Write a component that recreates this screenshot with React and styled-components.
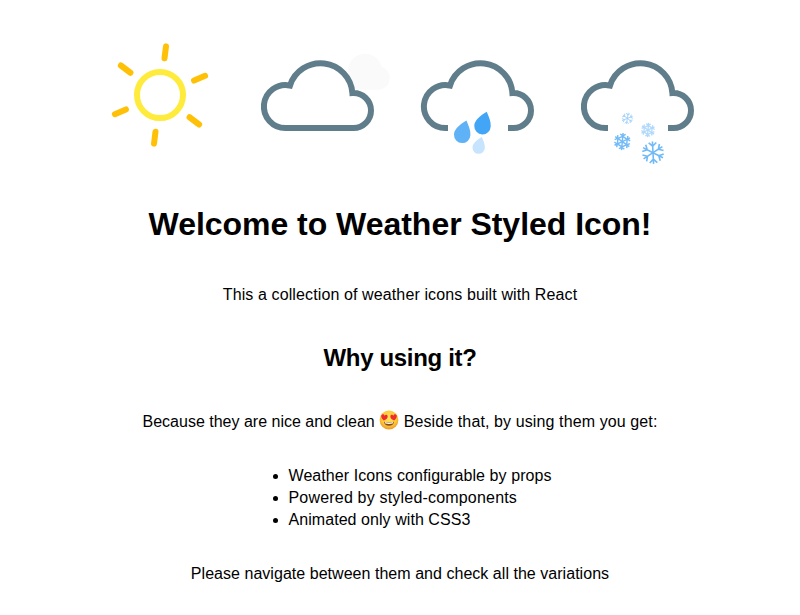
import React from "react";
import styled, { createGlobalStyle } from "styled-components";

const GlobalStyle = createGlobalStyle`
  body {
    margin: 0;
    background: #fff;
    color: #000;
    font-family: "Liberation Sans", Helvetica, Arial, sans-serif;
    font-size: 16px;
    line-height: 22px;
  }
`;

const Page = styled.main`
  display: flex;
  flex-direction: column;
  align-items: center;
  height: 615px;
  overflow: hidden;
`;

const IconRow = styled.div`
  display: flex;
  padding-top: 15px;
`;

const Icon = styled.svg`
  display: block;
  width: 160px;
  height: 160px;
`;

const Title = styled.h1`
  margin: 27px 0 0;
  font-size: 32px;
  line-height: 44px;
  letter-spacing: -0.03px;
  white-space: nowrap;
`;

const Subtitle = styled.h2`
  margin: 35px 0 0;
  font-size: 24px;
  line-height: 34px;
  letter-spacing: -0.33px;
  white-space: nowrap;
`;

const Text = styled.p`
  margin: ${(p) => p.$top} 0 0;
  letter-spacing: ${(p) => p.$spacing || "0"};
  white-space: nowrap;
`;

const Phrase = styled.span`
  letter-spacing: ${(p) => p.$spacing};
`;

const List = styled.ul`
  margin: 32px 0 0;
  padding-left: 40px;
  width: 263px;
`;

const Item = styled.li`
  letter-spacing: ${(p) => p.$spacing || "0"};
  white-space: nowrap;
`;

const Emoji = styled.svg`
  display: inline-block;
  width: 20px;
  height: 20px;
  vertical-align: 0;
  margin: -3px 0;
`;

const CLOUD_ARCS =
  "M48 113H45.5A21.5 21.5 0 1 1 50 70.5A32 32 0 0 1 112.4 78.05A17.5 17.5 0 0 1 131 95.5A17.5 17.5 0 0 1 113.5 113";

function Sun() {
  return (
    <Icon viewBox="0 0 160 160" fill="none" strokeWidth="6">
      <circle cx="80" cy="80" r="23" stroke="#ffeb3b" />
      {[7, 67, 127, 187, 247, 307].map((angle) => (
        <path
          key={angle}
          d="M80 43V31"
          stroke="#ffc107"
          strokeLinecap="round"
          transform={`rotate(${angle} 80 80)`}
        />
      ))}
    </Icon>
  );
}

function Cloud() {
  return (
    <Icon viewBox="0 0 160 160">
      <circle cx="125" cy="55.5" r="16.8" fill="#fafafa" />
      <circle cx="138" cy="63" r="11.8" fill="#fafafa" />
      <path d="M110 60H138V74.8H110Z" fill="#fafafa" />
      <path d={`${CLOUD_ARCS}Z`} fill="#fff" stroke="#607d8b" strokeWidth="6" />
    </Icon>
  );
}

const DROP = "M4.4 -13.2C-2 -9.4 -8 -4.5 -8 0.9A8.2 8.2 0 0 0 8.4 1.5C8.8 -3.5 6.6 -8 4.4 -13.2Z";

function Rain() {
  return (
    <Icon viewBox="0 0 160 160">
      <path d={`${CLOUD_ARCS}H108`} fill="none" stroke="#607d8b" strokeWidth="6" />
      <path d={DROP} fill="#42a5f5" transform="translate(82.3 110)" />
      <path d={DROP} fill="#60b2f7" transform="translate(62 118.7)" />
      <path d={DROP} fill="#c6e4fd" transform="translate(78.5 131.8) scale(.75)" />
    </Icon>
  );
}

function Flake({ x, y, size, angle = 0, color, weight = 1.5, ring = false }) {
  return (
    <g
      transform={`translate(${x} ${y}) rotate(${angle}) scale(${size / 10})`}
      stroke={color}
      strokeWidth={(weight * 10) / size}
      fill="none"
    >
      {[0, 60, 120, 180, 240, 300].map((a) => (
        <path
          key={a}
          d={ring ? "M0 0V-10M-3.2 -8.6L0 -6.6L3.2 -8.6" : "M0 0V-10M-3.4 -9L0 -5.8L3.4 -9"}
          transform={`rotate(${a})`}
        />
      ))}
      {ring && <path d="M0 -6.2L5.4 -3.1V3.1L0 6.2L-5.4 3.1V-3.1Z" />}
    </g>
  );
}

function Snow() {
  return (
    <Icon viewBox="0 0 160 160">
      <path d={`${CLOUD_ARCS}H108`} fill="none" stroke="#607d8b" strokeWidth="6" />
      <Flake x={67.4} y={103.4} size={5.7} angle={8} color="#9bcdf9" weight={0.8} />
      <Flake x={88} y={115} size={7.2} angle={5} color="#b0d9fb" weight={1.3} ring />
      <Flake x={62.3} y={126.6} size={8.6} angle={5} color="#72bbf7" weight={1.45} ring />
      <Flake x={93} y={137.7} size={11.2} angle={-3} color="#70baf7" weight={1.6} />
    </Icon>
  );
}

const HEART =
  "M0 3.3C-3 1.4 -3.6 -.2 -3.1 -1.6C-2.6 -3 -.8 -3 0 -1.5C.8 -3 2.6 -3 3.1 -1.6C3.6 -.2 3 1.4 0 3.3Z";

function HeartEyes() {
  return (
    <Emoji viewBox="0 0 20 20" role="img" aria-label="😍">
      <defs>
        <radialGradient id="face" cx=".5" cy=".4" r=".6">
          <stop offset="0" stopColor="#ffe65a" />
          <stop offset=".65" stopColor="#fdca38" />
          <stop offset="1" stopColor="#ed962a" />
        </radialGradient>
      </defs>
      <circle cx="10" cy="10" r="9.4" fill="url(#face)" />
      <path d="M5 11.7Q10 13.3 15 11.7Q14.5 15.7 10 15.7T5 11.7Z" fill="#8a4a18" />
      <path d="M5.8 12.1Q10 13.3 14.2 12.1L13.7 13.5Q10 14.4 6.3 13.5Z" fill="#fff" />
      <path d={HEART} fill="#f02b30" transform="translate(5.3 7.2) rotate(10)" />
      <path d={HEART} fill="#f02b30" transform="translate(14.7 7.2) rotate(-10)" />
    </Emoji>
  );
}

export default function App() {
  return (
    <Page>
      <GlobalStyle />
      <IconRow>
        <Sun />
        <Cloud />
        <Rain />
        <Snow />
      </IconRow>
      <Title>Welcome to Weather Styled Icon!</Title>
      <Text $top="38px" $spacing="0.115px">
        This a collection of weather icons built with React
      </Text>
      <Subtitle>Why using it?</Subtitle>
      <Text $top="36px">
        Because they are nice and clean <HeartEyes />
        <Phrase $spacing="0.11px"> Beside that, by using them you get:</Phrase>
      </Text>
      <List>
        <Item $spacing="0.08px">Weather Icons configurable by props</Item>
        <Item $spacing="0.19px">Powered by styled-components</Item>
        <Item $spacing="0.06px">Animated only with CSS3</Item>
      </List>
      <Text $top="32px" $spacing="0.035px">
        Please navigate between them and check all the variations
      </Text>
    </Page>
  );
}
